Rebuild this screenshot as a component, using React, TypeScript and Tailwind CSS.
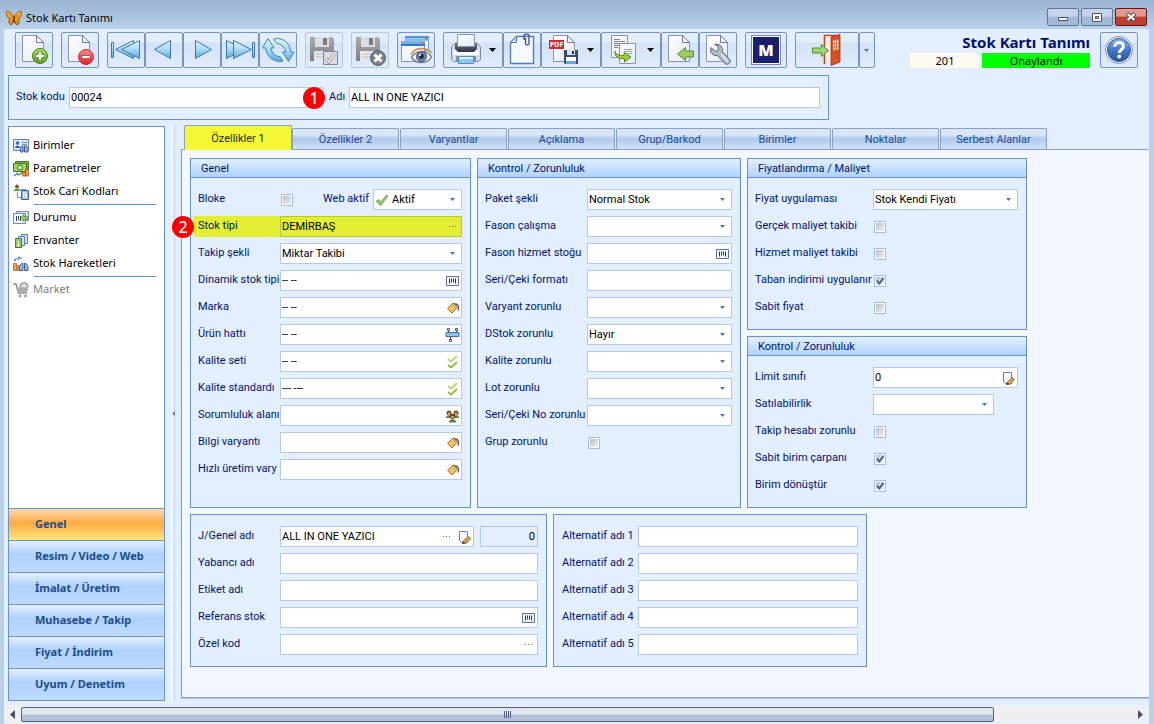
import React, { useId, useState } from 'react';

const tahoma = "font-[Roboto,'DejaVu_Sans_Condensed',sans-serif]";
const segoe = "font-['Noto_Sans','Open_Sans',sans-serif]";

// Shared gradients, referenced by the icons below
const Gradients = () => (
  <svg className="absolute h-0 w-0" aria-hidden="true">
    <defs>
      <linearGradient id="gBlue" x1="0" y1="0" x2="0" y2="1">
        <stop offset="0" stopColor="#e4f5fd" />
        <stop offset="0.5" stopColor="#a9d8f2" />
        <stop offset="1" stopColor="#5aa9dc" />
      </linearGradient>
      <linearGradient id="gDoc" x1="0" y1="0" x2="1" y2="1">
        <stop offset="0" stopColor="#ffffff" />
        <stop offset="1" stopColor="#e3e9f5" />
      </linearGradient>
      <linearGradient id="gGreen" x1="0" y1="0" x2="0" y2="1">
        <stop offset="0" stopColor="#b9e36a" />
        <stop offset="1" stopColor="#58a01c" />
      </linearGradient>
      <linearGradient id="gRed" x1="0" y1="0" x2="0" y2="1">
        <stop offset="0" stopColor="#ff8f8f" />
        <stop offset="1" stopColor="#dd1c24" />
      </linearGradient>
      <linearGradient id="gGray" x1="0" y1="0" x2="0" y2="1">
        <stop offset="0" stopColor="#a9abb0" />
        <stop offset="1" stopColor="#7c7e84" />
      </linearGradient>
      <linearGradient id="gHelp" x1="0" y1="0" x2="0" y2="1">
        <stop offset="0" stopColor="#8fb6ea" />
        <stop offset="0.5" stopColor="#3f78c8" />
        <stop offset="1" stopColor="#2a55a8" />
      </linearGradient>
      <linearGradient id="gDark" x1="0" y1="0" x2="0" y2="1">
        <stop offset="0" stopColor="#6a7284" />
        <stop offset="1" stopColor="#2c3344" />
      </linearGradient>
      <linearGradient id="gWing" x1="0" y1="0" x2="0" y2="1">
        <stop offset="0" stopColor="#ffb52a" />
        <stop offset="1" stopColor="#e07a08" />
      </linearGradient>
    </defs>
  </svg>
);

// Toolbar icons share the button's own coordinate space
const BigIcon = ({ w = 38, children }: { w?: number; children: React.ReactNode }) => (
  <svg width={w - 2} height={34} viewBox={`1 1 ${w - 2} 34`} fill="none" aria-hidden="true">
    {children}
  </svg>
);

const Page = () => (
  <g>
    <path d="M7.500 3.500h14l7 7v19h-21z" fill="url(#gDoc)" stroke="#8a93b4" />
    <path d="M21.500 3.500v7h7z" fill="#f4f7fc" stroke="#6f7aa2" />
  </g>
);

const Caret = ({ x }: { x: number }) => <path d={`M${x} 16h7l-3.500 4z`} fill="#000" />;

const NewIcon = () => (
  <BigIcon>
    <Page />
    <circle cx="25" cy="24" r="7.500" fill="url(#gGreen)" stroke="#44801a" />
    <path d="M25 19.500v9M20.500 24h9" stroke="#44801a" strokeWidth="4.400" />
    <path d="M25 20v8M21 24h8" stroke="#fff" strokeWidth="2.500" />
  </BigIcon>
);

const DeleteIcon = () => (
  <BigIcon>
    <Page />
    <circle cx="25" cy="25" r="7.500" fill="url(#gRed)" stroke="#d02a30" />
    <path d="M20.500 25h9" stroke="#b5161c" strokeWidth="4" />
    <path d="M21 25h8" stroke="#fff" strokeWidth="2.500" />
  </BigIcon>
);

const FirstIcon = () => (
  <BigIcon>
    <g fill="url(#gBlue)" stroke="#3a78b8" strokeLinejoin="round">
      <path d="M4.500 10.500h2v15h-2z" />
      <path d="M26.500 8.500v18L8.500 17.500z" />
      <path d="M32.500 8.500v18L14.500 17.500z" />
    </g>
  </BigIcon>
);

const PrevIcon = () => (
  <BigIcon>
    <path d="M25.500 8.500v18L9.500 17.500z" fill="url(#gBlue)" stroke="#3a78b8" strokeLinejoin="round" />
  </BigIcon>
);

const NextIcon = () => (
  <BigIcon>
    <path d="M12.500 8.500v18L28.500 17.500z" fill="url(#gBlue)" stroke="#3a78b8" strokeLinejoin="round" />
  </BigIcon>
);

const LastIcon = () => (
  <BigIcon>
    <g fill="url(#gBlue)" stroke="#3a78b8" strokeLinejoin="round">
      <path d="M5.500 8.500v18L23.500 17.500z" />
      <path d="M12.500 8.500v18L30.500 17.500z" />
      <path d="M31.500 10.500h2v15h-2z" />
    </g>
  </BigIcon>
);

const RefreshIcon = () => (
  <BigIcon>
    <g fill="url(#gBlue)" stroke="#3a86bd" strokeLinejoin="round">
      <path d="M9 6.500L3.500 16h3.300c.3 7.500 6.500 13.500 14.200 13.500l3-.5-3-4.500c-4.500 0-8.500-3.500-9-8.500h3z" />
      <path d="M29.500 29.500L35 20h-3.300C31.400 12 25.500 6.500 18 6.500l-3.500.7 3.500 4.300c4.500 0 8 3.500 8.700 8.500h-3.200z" />
    </g>
  </BigIcon>
);

const GrayFloppy = () => (
  <g>
    <path d="M5 5h22l2 2v22H5z" fill="url(#gGray)" />
    <path d="M10 5h14v10H10z" fill="#dcdee2" />
    <path d="M18 6h4v7h-4z" fill="#7c7e84" />
    <path d="M9 19h16v10H9z" fill="#e6e7ea" />
    <path d="M11 22h12M11 25h12" stroke="#c0c2c7" />
  </g>
);

const SaveIcon = () => (
  <BigIcon>
    <GrayFloppy />
    <path d="M18.500 19.500h14v13h-14z" fill="#d9dadd" stroke="#85878c" />
    <path d="M21 26.500l3 3.500 5.500-8" stroke="#85878c" strokeWidth="3" />
    <path d="M21 26.500l3 3.500 5.500-8" stroke="#f5f5f5" strokeWidth="1.500" />
  </BigIcon>
);

const SaveCloseIcon = () => (
  <BigIcon>
    <GrayFloppy />
    <circle cx="27" cy="26" r="7.500" fill="#7d7f85" stroke="#5f6167" />
    <path d="M23.500 22.500l7 7M30.500 22.500l-7 7" stroke="#fff" strokeWidth="3" />
  </BigIcon>
);

const PreviewIcon = () => (
  <BigIcon>
    <path d="M8.500 4.500h23v14h-23z" fill="#eef4fd" stroke="#7b9fcf" />
    <path d="M8 4h24v2.500H8z" fill="#4f97dc" />
    <path d="M8 6.500h24V9H8z" fill="#8fc1ee" />
    <path d="M28 5.500h2.500v2H28z" fill="#f2552c" />
    <path d="M4.500 9.500h23v20h-23z" fill="url(#gDoc)" stroke="#8a93b4" />
    <path d="M4 9h24v2.500H4z" fill="#7db4e8" />
    <path d="M4 11.500h24V14H4z" fill="#2f7ac9" />
    <path d="M24 10.500h2.500v2H24z" fill="#f2552c" />
    <path d="M14.500 25.500c4-7.500 16-8 20-.5-4 7-15 7.500-20 .5z" fill="#f4f5fa" stroke="#68708c" strokeWidth="1.300" />
    <path d="M14 22.500c4-7.500 15.500-7.500 20.500-1.500" stroke="#d2964e" strokeWidth="1.800" />
    <circle cx="24.500" cy="24.500" r="5" fill="#6d83a5" stroke="#475777" />
    <circle cx="24.500" cy="24.500" r="2.400" fill="#1e2740" />
    <circle cx="23" cy="23" r="1" fill="#fff" />
  </BigIcon>
);

const PrintIcon = () => (
  <BigIcon w={60}>
    <path d="M8.500 15l4-4h21l4 4v12.500l-2 2h-25l-2-2z" fill="#d3d9e6" stroke="#7e89a3" />
    <path d="M10 18h26v5H10z" fill="#f7f9fc" />
    <path d="M12 11h22v6l-3 3H15l-3-3z" fill="url(#gDark)" />
    <path d="M14.500 2.500h17v12h-17z" fill="url(#gDoc)" stroke="#8a93b4" />
    <path d="M13 24h20v6H13z" fill="#858fa6" />
    <path d="M15.500 24.500h15v7h-15z" fill="#8fc6ee" stroke="#4d8fc9" />
    <path d="M16 25h14v2H16z" fill="#d8effc" />
    <Caret x={46} />
  </BigIcon>
);

const ClipIcon = () => (
  <BigIcon>
    <path d="M13.500 4.500h17v27h-23v-21z" fill="#f4faff" stroke="#4f82bd" strokeWidth="1.400" />
    <path d="M7.500 10.500l6-6v6z" fill="#c6dff4" stroke="#4f82bd" />
    <path d="M22.500 6v5.500c0 2 3.500 2 3.500 0V4c0-2.500-5-2.500-5 0v4" stroke="#3d5273" strokeWidth="1.300" />
  </BigIcon>
);

const PdfIcon = () => (
  <BigIcon w={60}>
    <g transform="translate(5 0)">
      <Page />
    </g>
    <path d="M8 8h15v9H8z" fill="#cf2a2c" />
    <text x="9" y="15" fontSize="7" fontWeight="bold" fill="#fff" fontFamily="Noto Sans, sans-serif">
      PDF
    </text>
    <path d="M23 18h14v14H24l-1-1z" fill="#3b4a6e" />
    <path d="M26 18h8v5h-8z" fill="#d8dfec" />
    <path d="M31 19h2v3h-2z" fill="#26324f" />
    <path d="M25 25h10v7H25z" fill="#fff" />
    <path d="M25 29h10v3H25z" fill="#5fa8e2" />
    <Caret x={46} />
  </BigIcon>
);

const CopyIcon = () => (
  <BigIcon w={60}>
    <path d="M10.500 3.500h16v22h-16z" fill="url(#gDoc)" stroke="#8a93b4" />
    <path d="M13 7.500h6M13 9.500h11M13 11.500h9M13 13.500h5M13 15.500h4" stroke="#7b8099" />
    <path d="M18.500 11.500h16v20h-16z" fill="url(#gDoc)" stroke="#8a93b4" />
    <path d="M23 17.500h8M23 19.500h8M26 21.500h5" stroke="#9ba0b5" />
    <path d="M14 19c1 4 4 4.500 9 4.500v-3l7 4.500-6.500 5v-3.200C16 27 13.500 24 14 19z" fill="#9bd03d" stroke="#55881d" />
    <Caret x={46} />
  </BigIcon>
);

const ImportIcon = () => (
  <BigIcon>
    <Page />
    <path d="M16.500 22l8-6.500v3.500h8v6h-8v3.500z" fill="#9ccb66" stroke="#548f2c" strokeLinejoin="round" />
  </BigIcon>
);

const WrenchIcon = () => (
  <BigIcon>
    <Page />
    <path
      d="M12 15.500l4.500 4 3-1.500-.5-4-3.500-1.500c5-1 8.500 2 8 7l7.500 8.500c1 3-2 5-4.500 4l-8-8.500c-4.500 1-8-3-6.500-8z"
      fill="#b4bccb"
      stroke="#59627a"
      strokeLinejoin="round"
    />
    <path d="M22 22l7 7.500" stroke="#e6eaf2" strokeWidth="1.500" />
  </BigIcon>
);

const ExitIcon = () => (
  <BigIcon w={64}>
    <path d="M29.500 32V3.500h15" stroke="#cc3f16" strokeWidth="1.600" />
    <path d="M30.500 4.500h6v26h-6z" fill="#f6efec" />
    <path d="M36 5l9-2.500V30l-9 3.500z" fill="#d94f20" stroke="#a83410" strokeWidth="0.800" />
    <path d="M38 8.500l5.500-1v10l-5.500 1z" fill="#f4dfc0" />
    <path d="M39.800 8v10M41.700 8v10M38 12l5.500-.8M38 15.300l5.500-.8" stroke="#b06034" strokeWidth="0.700" />
    <path d="M33.500 18.500l-7-6v3.500h-9v5h9v3.500z" fill="#a3d772" stroke="#4e8f2c" strokeLinejoin="round" />
  </BigIcon>
);

const HelpIcon = () => (
  <BigIcon>
    <circle cx="19" cy="18" r="13.500" fill="#f3f7fd" stroke="#7f8fb4" />
    <circle cx="19" cy="18" r="11.500" fill="url(#gHelp)" stroke="#2f559c" />
    <path d="M14.800 14.800c0-5.600 8.600-5.600 8.600-.4 0 3-4.100 3.200-4.100 6.600" stroke="#fff" strokeWidth="3" />
    <circle cx="19.200" cy="24.500" r="1.900" fill="#fff" />
  </BigIcon>
);

const Butterfly = () => (
  <svg width="16" height="16" viewBox="0 0 16 16" aria-hidden="true">
    <path d="M8 7C6 3 2 .5.500 1.500 0 4 1 8 4 9c-2 1-1.500 5 1 6 2-1 2.500-4 3-6 .5 2 1 5 3 6 2.500-1 3-5 1-6 3-1 4-5 3.500-7.500C14 .5 10 3 8 7z" fill="url(#gWing)" stroke="#7a4207" strokeWidth="0.700" />
    <path d="M8 6v7" stroke="#3c2408" strokeWidth="1.200" />
    <path d="M7.500 8L4 4.500M8.500 8L12 4.500" stroke="#b0640c" strokeWidth="0.600" />
  </svg>
);

// Small icons inside the fields
const Small = ({ children }: { children: React.ReactNode }) => (
  <svg width="16" height="16" viewBox="0 0 16 16" fill="none" aria-hidden="true">
    {children}
  </svg>
);

const fieldIcons: Record<string, React.ReactNode> = {
  dots: (
    <Small>
      <path d="M4 7.500h1M7 7.500h1M10 7.500h1" stroke="#4a78b5" />
    </Small>
  ),
  barcode: (
    <Small>
      <path d="M1.500 3.500h12v9h-12z" fill="#f2f5fc" stroke="#5b71a8" />
      <path d="M4.500 5.500v5M6.500 5.500v4M8.500 5.500v4M10.500 5.500v5" stroke="#30354c" />
    </Small>
  ),
  tag: (
    <Small>
      <path d="M2.500 8.500L8 3l3.500 1 .5 3.500-5 5.500z" fill="#fbc065" stroke="#a96a22" strokeLinejoin="round" />
      <path d="M9.500 5.500c2-3 5.500-.5 3.500 5" stroke="#5c5c66" strokeWidth="1.200" />
      <circle cx="9.500" cy="5.500" r="1" fill="#fff" stroke="#7a5a3a" strokeWidth="0.600" />
    </Small>
  ),
  line: (
    <Small>
      <path d="M1 5.500h13v4H1z" fill="#8ec0ea" stroke="#3d70ad" />
      <path d="M3.500 3.500v2M11.500 3.500v2M5.500 10v2" stroke="#44506e" />
      <path d="M2.500 1.500h2v2h-2zM10.500 1.500h2v2h-2zM4.500 12.500h2v2h-2z" fill="#fff" stroke="#44506e" />
    </Small>
  ),
  ticks: (
    <Small>
      <path d="M3 5l3 2.500 6-5.500" stroke="#b8d977" strokeWidth="2" />
      <path d="M3 11l3 2.500 6-5.500" stroke="#8fc23f" strokeWidth="2" />
    </Small>
  ),
  people: (
    <Small>
      <path d="M1 9.500c1-2 5-2 6 0zM8 9.500c1-2 5-2 6 0zM4 14c1-3 6-3 7 0z" fill="#4f9c3a" stroke="#2e6b22" strokeWidth="0.700" />
      <circle cx="4" cy="5" r="2.500" fill="#7b4a22" />
      <circle cx="11" cy="5" r="2.500" fill="#7b4a22" />
      <circle cx="7.500" cy="8.500" r="2.700" fill="#6b3d19" />
      <circle cx="4" cy="5.700" r="1.300" fill="#e0a872" />
      <circle cx="11" cy="5.700" r="1.300" fill="#e0a872" />
      <circle cx="7.500" cy="9.200" r="1.400" fill="#e0a872" />
    </Small>
  ),
  edit: (
    <Small>
      <path d="M2.500 2.500h8v11h-6l-2-2z" fill="#f5f8fe" stroke="#6d7fb0" />
      <path d="M6 12.500l5-5 2.500 2L9 14.500z" fill="#e3a04c" stroke="#8a4f1c" strokeWidth="0.800" />
      <path d="M5 15l1-2.500 2.500 2z" fill="#333" />
    </Small>
  ),
};

const sideIcons: Record<string, React.ReactNode> = {
  units: (
    <Small>
      <path d="M.5 1.500h15v11H.5z" fill="#d9e6f8" stroke="#5b80b8" />
      <circle cx="4.500" cy="5" r="1.700" fill="#41629b" />
      <path d="M2 10c.5-3.500 4.500-3.500 5 0z" fill="#41629b" />
      <path d="M9 4.500h5M9 6.500h5" stroke="#6d93c9" />
      <path d="M7.500 14V10l1.500-2h1v6zM11.500 14V8h1.500l2 2.500V14z" fill="#9db9e4" stroke="#3a5a97" />
    </Small>
  ),
  money: (
    <Small>
      <path d="M2.500.5h13v8h-13z" fill="#7cb548" stroke="#3c7a1c" />
      <path d="M.5 2.500h13v8H.5z" fill="#a4d36b" stroke="#3c7a1c" />
      <circle cx="7" cy="6.500" r="2.500" fill="#d8efb8" stroke="#3c7a1c" />
      <path d="M1 15l3-2.500 2 1.500 3-2.500" stroke="#3f79c2" strokeWidth="1.300" />
      <path d="M9.500 11h3v4h-3zM12.500 8.500h3v6.500h-3z" fill="#ef9f4e" stroke="#a3561a" strokeWidth="0.800" />
    </Small>
  ),
  codes: (
    <Small>
      <circle cx="4" cy="2.500" r="2" fill="#8a552b" />
      <path d="M.5 7c.5-3.500 6.500-3.500 7 0z" fill="#5ba23c" />
      <path d="M4.500 8v5.500h4M7 5.500h6" stroke="#7d8db0" />
      <path d="M8.500 6.500h7v9h-7z" fill="#8db9ec" stroke="#3867a8" />
      <path d="M10.500 8.500h2.500v2.500h-2.500zM10.500 11h3v2.500h-3z" stroke="#fff" />
    </Small>
  ),
  status: (
    <Small>
      <path d="M3.500 1.500h12v9h-12z" fill="#dfe8f7" stroke="#7089b8" />
      <path d="M.5 3.500h12v10H.5z" fill="#f1f5fc" stroke="#7089b8" />
      <path d="M3.500 6v5M5.500 6v4M7.500 6v5" stroke="#39415c" />
      <path d="M7 8l4-3.500V6.500h3.500v3H11v2z" fill="#97cf58" stroke="#4b8b28" strokeWidth="0.700" />
    </Small>
  ),
  stock: (
    <Small>
      <path d="M8.500 1.500h6v9h-6z" fill="#cfe0f6" stroke="#5a7fb8" />
      <path d="M5.500 3.500h6v9h-6z" fill="#cfe0f6" stroke="#5a7fb8" />
      <path d="M2.500 5.500h6v9h-6z" fill="#8fd05a" stroke="#3c8a1e" />
      <path d="M4.500 8.500h1v4M4 12.500h3" stroke="#fff" />
    </Small>
  ),
  moves: (
    <Small>
      <path d="M1.500 4l2-1.500 2 1L9 1.500" stroke="#3f79c2" />
      <circle cx="2" cy="4" r="1" fill="#3f79c2" />
      <circle cx="6" cy="1.500" r="1" fill="#3f79c2" />
      <path d="M.5 7.500h3v7h-3zM4.500 9.500h2v5h-2z" fill="#f0a050" stroke="#a3561a" strokeWidth="0.700" />
      <path d="M6.500 14.500v-4l2-3h1.500v7zM11.500 14.500v-7H13l2 3v4z" fill="#9db9e4" stroke="#3a5a97" />
    </Small>
  ),
  cart: (
    <Small>
      <path d="M0 2h3l2.500 9h8.500" stroke="#8e8e8e" strokeWidth="1.500" />
      <circle cx="11" cy="4.500" r="4" fill="#c4c4c4" stroke="#8e8e8e" />
      <path d="M8 4h6M11 1v7" stroke="#eee" />
      <path d="M4 5.500h11.500l-1.500 4.500H5z" fill="#adadad" />
      <circle cx="7" cy="14" r="1.300" fill="#8e8e8e" />
      <circle cx="12.500" cy="14" r="1.300" fill="#8e8e8e" />
    </Small>
  ),
};

interface ToolButtonProps {
  label: string;
  disabled?: boolean;
  children: React.ReactNode;
}

const ToolButton: React.FC<ToolButtonProps> = ({ label, disabled, children }) => (
  <button
    type="button"
    aria-label={label}
    disabled={disabled}
    className="flex h-9 shrink-0 items-center justify-center rounded-xs border border-[#7595c2] bg-linear-to-b from-[#e4eefb] from-25% via-[#d3e2f5] via-30% to-[#e0ecfb] disabled:border-[#b5c8e2]"
  >
    {children}
  </button>
);

const Toolbar = () => (
  <div className="flex items-start gap-2 pt-[3px] pr-[11px] pl-[11px]">
    <ToolButton label="Yeni"><NewIcon /></ToolButton>
    <ToolButton label="Sil"><DeleteIcon /></ToolButton>
    <div className="flex">
      <ToolButton label="İlk"><FirstIcon /></ToolButton>
      <ToolButton label="Önceki"><PrevIcon /></ToolButton>
      <ToolButton label="Sonraki"><NextIcon /></ToolButton>
      <ToolButton label="Son"><LastIcon /></ToolButton>
      <ToolButton label="Yenile"><RefreshIcon /></ToolButton>
    </div>
    <ToolButton label="Kaydet" disabled><SaveIcon /></ToolButton>
    <ToolButton label="Kaydet ve kapat" disabled><SaveCloseIcon /></ToolButton>
    <ToolButton label="Önizleme"><PreviewIcon /></ToolButton>
    <div className="flex">
      <ToolButton label="Yazdır"><PrintIcon /></ToolButton>
      <ToolButton label="Ekler"><ClipIcon /></ToolButton>
      <ToolButton label="PDF"><PdfIcon /></ToolButton>
      <ToolButton label="Kopyala"><CopyIcon /></ToolButton>
      <ToolButton label="İçeri al"><ImportIcon /></ToolButton>
      <ToolButton label="Ayarlar"><WrenchIcon /></ToolButton>
    </div>
    <ToolButton label="Modül">
      <span className="mx-[5px] grid size-[30px] place-items-center border border-[#7d86ad] bg-white p-px">
        <span className={`${segoe} grid size-full place-items-center bg-[#1a2070] text-base leading-none font-black text-white`}>M</span>
      </span>
    </ToolButton>
    <div className="flex">
      <ToolButton label="Çıkış"><ExitIcon /></ToolButton>
      <ToolButton label="Çıkış seçenekleri">
        <svg width="14" height="34" viewBox="0 0 14 34" aria-hidden="true">
          <path d="M4 16h5l-2.500 3z" fill="#4a78b5" />
        </svg>
      </ToolButton>
    </div>
    <div className={`${segoe} ml-auto flex flex-col items-end pr-0.5`}>
      <h1 className="text-[15px] leading-[21px] font-bold text-[#00106e]">Stok Kartı Tanımı</h1>
      <div className="flex gap-0.5 text-center text-[11px] leading-[15px] text-black">
        <span className="w-[70px] bg-[#fffaf0]">201</span>
        <span className="w-[108px] bg-[#00ff00]">Onaylandı</span>
      </div>
    </div>
    <ToolButton label="Yardım"><HelpIcon /></ToolButton>
  </div>
);

const TitleBar = () => (
  <div className="flex h-[29px] items-start bg-linear-to-b from-[#99b4d1] to-[#b9d1ea] pt-2 pr-[7px] pl-1.5">
    <div className="flex items-center gap-1">
      <Butterfly />
      <span className={`${segoe} text-[11px] leading-[19px] text-black`}>Stok Kartı Tanımı</span>
    </div>
    <div className="ml-auto flex gap-0.5">
      <button type="button" aria-label="Küçült" className="grid h-[18px] w-8 place-items-center rounded-xs border border-[#5f7694] bg-linear-to-b from-[#c5d6ea] from-45% to-[#a3bad6] to-50%">
        <svg width="12" height="12" viewBox="0 0 12 12"><path d="M1.500 6.500h9v3h-9z" fill="#fff" stroke="#4a5468" /></svg>
      </button>
      <button type="button" aria-label="Büyüt" className="grid h-[18px] w-8 place-items-center rounded-xs border border-[#5f7694] bg-linear-to-b from-[#c5d6ea] from-45% to-[#a3bad6] to-50%">
        <svg width="12" height="12" viewBox="0 0 12 12"><path d="M1.500 2.500h9v8h-9z" fill="#fff" stroke="#4a5468" /><path d="M4.500 5.500h3v2h-3z" fill="#a9bdd6" stroke="#4a5468" /></svg>
      </button>
      <button type="button" aria-label="Kapat" className="grid h-[18px] w-8 place-items-center rounded-xs border border-[#5a1a1c] bg-linear-to-b from-[#e39a8c] from-45% to-[#bd3f2c] to-50%">
        <svg width="12" height="12" viewBox="0 0 12 12"><path d="M2 2.500l8 7M10 2.500l-8 7" stroke="#4a4a58" strokeWidth="4" /><path d="M2.500 3l7 6M9.500 3l-7 6" stroke="#fff" strokeWidth="2.200" /></svg>
      </button>
    </div>
  </div>
);

const Badge = ({ children }: { children: React.ReactNode }) => (
  <span className={`${segoe} grid size-[22px] place-items-center rounded-full bg-[#fe0000] text-base leading-none font-medium text-white`}>
    {children}
  </span>
);

interface TextBoxProps {
  id: string;
  value?: string;
  icons?: string[];
}

const TextBox: React.FC<TextBoxProps> = ({ id, value = '', icons = [] }) => (
  <div className="flex h-[21px] min-w-0 flex-1 items-center border border-[#b3c9e6] bg-white">
    <input id={id} defaultValue={value} className="h-full min-w-0 flex-1 bg-transparent pl-px text-black outline-none" />
    {icons.map((icon) => (
      <button key={icon} type="button" aria-label={icon} className="ml-0.5 shrink-0">
        {fieldIcons[icon]}
      </button>
    ))}
  </div>
);

const SelectBox = ({ id, value = '', tick }: { id: string; value?: string; tick?: boolean }) => (
  <div className="grid h-[21px] min-w-0 flex-1 items-center border border-[#b3c9e6] bg-white">
    <select
      id={id}
      defaultValue={value}
      className={`col-start-1 row-start-1 h-full min-w-0 appearance-none bg-transparent pt-px text-black outline-none ${tick ? 'pl-[18px]' : 'pl-px'}`}
    >
      <option value={value}>{value}</option>
    </select>
    {tick && (
      <svg width="14" height="14" viewBox="0 0 14 14" fill="none" className="pointer-events-none col-start-1 row-start-1 ml-px" aria-hidden="true">
        <path d="M1 8l2.500-1.500L5.500 9 12 1.500 13 3 6 12.500H5z" fill="#8fc25a" stroke="#6a9f3c" strokeWidth="0.600" />
      </svg>
    )}
    <svg width="5" height="3" viewBox="0 0 5 3" className="pointer-events-none col-start-1 row-start-1 mr-1.5 justify-self-end" aria-hidden="true">
      <path d="M0 0h5L2.500 3z" fill="#4a78b5" />
    </svg>
  </div>
);

const CheckBox = ({ id, checked = false }: { id: string; checked?: boolean }) => (
  <span className="ml-px grid size-3 shrink-0">
    <input
      id={id}
      type="checkbox"
      defaultChecked={checked}
      className="peer col-start-1 row-start-1 size-3 appearance-none border border-[#a3bfe1] bg-linear-to-br from-[#b4b9c2] to-[#f6f7f9] shadow-[inset_0_0_0_1px_#fff]"
    />
    <svg viewBox="0 0 12 12" fill="none" className="pointer-events-none invisible col-start-1 row-start-1 size-3 peer-checked:visible" aria-hidden="true">
      <path d="M3 5.500l2.300 3L9.500 3" stroke="#41608e" strokeWidth="1.900" />
    </svg>
  </span>
);

interface FieldData {
  label: string;
  kind?: 'text' | 'select' | 'check';
  value?: string;
  icons?: string[];
  checked?: boolean;
  narrow?: boolean;
}

const Field = ({ field, labelClass }: { field: FieldData; labelClass: string }) => {
  const id = useId();
  return (
    <div className="flex h-[21px] items-center">
      <label htmlFor={id} className={`shrink-0 whitespace-nowrap ${labelClass}`}>{field.label}</label>
      {field.kind === 'check' && <CheckBox id={id} checked={field.checked} />}
      {field.kind === 'select' && (
        <div className={`flex flex-1 ${field.narrow ? 'pr-6' : ''}`}>
          <SelectBox id={id} value={field.value} />
        </div>
      )}
      {(!field.kind || field.kind === 'text') && <TextBox id={id} value={field.value} icons={field.icons} />}
    </div>
  );
};

const Group = ({ title, className = '', children }: { title?: string; className?: string; children: React.ReactNode }) => (
  <section className={`border border-[#6593cf] bg-[#e3efff] ${className}`}>
    {title && (
      <h2 className="h-[19px] border-b border-[#6593cf] bg-linear-to-b from-[#e3efff] to-[#afd2ff] pl-2.5 leading-[19px]">{title}</h2>
    )}
    <div className="flex flex-col gap-1.5 py-[11px] pr-2 pl-[7px]">{children}</div>
  </section>
);

const genelFields: FieldData[] = [
  { label: 'Dinamik stok tipi', value: '-- --', icons: ['barcode'] },
  { label: 'Marka', value: '-- --', icons: ['tag'] },
  { label: 'Ürün hattı', value: '-- --', icons: ['line'] },
  { label: 'Kalite seti', value: '-- --', icons: ['ticks'] },
  { label: 'Kalite standardı', value: '--- ---', icons: ['ticks'] },
  { label: 'Sorumluluk alanı', icons: ['people'] },
  { label: 'Bilgi varyantı', icons: ['tag'] },
  { label: 'Hızlı üretim vary', icons: ['tag'] },
];

const kontrolFields: FieldData[] = [
  { label: 'Paket şekli', kind: 'select', value: 'Normal Stok' },
  { label: 'Fason çalışma', kind: 'select' },
  { label: 'Fason hizmet stoğu', icons: ['barcode'] },
  { label: 'Seri/Çeki formatı' },
  { label: 'Varyant zorunlu', kind: 'select' },
  { label: 'DStok zorunlu', kind: 'select', value: 'Hayır' },
  { label: 'Kalite zorunlu', kind: 'select' },
  { label: 'Lot zorunlu', kind: 'select' },
  { label: 'Seri/Çeki No zorunlu', kind: 'select' },
  { label: 'Grup zorunlu', kind: 'check' },
];

const fiyatFields: FieldData[] = [
  { label: 'Fiyat uygulaması', kind: 'select', value: 'Stok Kendi Fiyatı' },
  { label: 'Gerçek maliyet takibi', kind: 'check' },
  { label: 'Hizmet maliyet takibi', kind: 'check' },
  { label: 'Taban indirimi uygulanır', kind: 'check', checked: true },
  { label: 'Sabit fiyat', kind: 'check' },
];

const limitFields: FieldData[] = [
  { label: 'Limit sınıfı', value: '0', icons: ['edit'] },
  { label: 'Satılabilirlik', kind: 'select', narrow: true },
  { label: 'Takip hesabı zorunlu', kind: 'check' },
  { label: 'Sabit birim çarpanı', kind: 'check', checked: true },
  { label: 'Birim dönüştür', kind: 'check', checked: true },
];

const adFields: FieldData[] = [
  { label: 'Yabancı adı' },
  { label: 'Etiket adı' },
  { label: 'Referans stok', icons: ['barcode'] },
  { label: 'Özel kod', icons: ['dots'] },
];

const sideGroups = [
  [
    { label: 'Birimler', icon: 'units' },
    { label: 'Parametreler', icon: 'money' },
    { label: 'Stok Cari Kodları', icon: 'codes' },
  ],
  [
    { label: 'Durumu', icon: 'status' },
    { label: 'Envanter', icon: 'stock' },
    { label: 'Stok Hareketleri', icon: 'moves' },
  ],
  [{ label: 'Market', icon: 'cart', disabled: true }],
];

const sections = ['Genel', 'Resim / Video / Web', 'İmalat / Üretim', 'Muhasebe / Takip', 'Fiyat / İndirim', 'Uyum / Denetim'];

const tabs = ['Özellikler 1', 'Özellikler 2', 'Varyantlar', 'Açıklama', 'Grup/Barkod', 'Birimler', 'Noktalar', 'Serbest Alanlar'];

const Sidebar = () => {
  const [section, setSection] = useState<string>('Genel');

  return (
    <aside className={`${segoe} mt-px flex w-[157px] shrink-0 flex-col border border-[#6593cf] bg-white`}>
      <div className="flex-1 pt-[7px] text-black">
        {sideGroups.map((group, i) => (
          <div key={group[0].label}>
            {i > 0 && <hr className="my-px mr-2 ml-[25px] border-[#6593cf]" />}
            {group.map((item) => (
              <button
                key={item.label}
                type="button"
                disabled={'disabled' in item}
                className="flex h-[23px] w-full items-center gap-1 pl-1 text-left disabled:text-[#7d7d7d]"
              >
                {sideIcons[item.icon]}
                {item.label}
              </button>
            ))}
          </div>
        ))}
      </div>
      <nav>
        {sections.map((name) => (
          <button
            key={name}
            type="button"
            onClick={() => setSection(name)}
            className={`block h-8 w-full border-t border-[#6593cf] bg-linear-to-b pl-[26px] text-left font-bold text-[#204d89] ${
              name === section
                ? 'from-[#ffd9a8] from-0% via-[#ffab3f] via-45% to-[#fee67c]'
                : 'from-[#e3efff] from-0% via-[#add1ff] via-45% to-[#c0dbff]'
            }`}
          >
            {name}
          </button>
        ))}
      </nav>
    </aside>
  );
};

const FormPanel = () => (
  <div className="flex flex-1 flex-col gap-1.5 border border-r-0 border-[#8ba0c4] bg-[#f3f7ff] pt-2 pb-4 pl-2 shadow-[0_1px_1px_#b5cbe6]">
    <div className="flex gap-1.5">
      <Group title="Genel" className="w-[281px]">
        <div className="flex h-[21px] items-center">
          <label htmlFor="bloke" className="w-[82px] shrink-0">Bloke</label>
          <CheckBox id="bloke" />
          <label htmlFor="webAktif" className="mr-1 ml-auto">Web aktif</label>
          <div className="flex w-[89px]">
            <SelectBox id="webAktif" value="Aktif" tick />
          </div>
        </div>
        <div className="relative -ml-1 flex h-[21px] items-center bg-[#e2ef32] pl-1">
          <div className="absolute -left-[22px]">
            <Badge>2</Badge>
          </div>
          <label htmlFor="stokTipi" className="w-[82px] shrink-0">Stok tipi</label>
          <div className="flex h-[21px] min-w-0 flex-1 items-center border border-[#b9c92c]">
            <input id="stokTipi" defaultValue="DEMİRBAŞ" className="h-full min-w-0 flex-1 bg-transparent pl-px text-black outline-none" />
            <button type="button" aria-label="Stok tipi seç" className="shrink-0">{fieldIcons.dots}</button>
          </div>
        </div>
        <Field field={{ label: 'Takip şekli', kind: 'select', value: 'Miktar Takibi' }} labelClass="w-[82px]" />
        {genelFields.map((f) => <Field key={f.label} field={f} labelClass="w-[82px]" />)}
      </Group>

      <Group title="Kontrol / Zorunluluk" className="w-[264px]">
        {kontrolFields.map((f) => <Field key={f.label} field={f} labelClass="w-[102px]" />)}
      </Group>

      <div className="flex w-[280px] flex-col gap-1.5">
        <Group title="Fiyatlandırma / Maliyet">
          {fiyatFields.map((f) => <Field key={f.label} field={f} labelClass="w-[118px]" />)}
        </Group>
        <Group title="Kontrol / Zorunluluk">
          {limitFields.map((f) => <Field key={f.label} field={f} labelClass="w-[118px]" />)}
        </Group>
      </div>
    </div>

    <div className="flex gap-1.5">
      <Group className="w-[357px]">
        <div className="flex items-center">
          <label htmlFor="genelAdi" className="w-[82px] shrink-0">J/Genel adı</label>
          <TextBox id="genelAdi" value="ALL IN ONE YAZICI" icons={['dots', 'edit']} />
          <input
            aria-label="Sayaç"
            defaultValue="0"
            className="ml-1.5 h-[21px] w-[58px] border border-[#b3c9e6] bg-transparent pr-0.5 text-right text-black outline-none"
          />
        </div>
        {adFields.map((f) => <Field key={f.label} field={f} labelClass="w-[82px]" />)}
      </Group>
      <Group className="w-[314px]">
        {[1, 2, 3, 4, 5].map((n) => (
          <Field key={n} field={{ label: `Alternatif adı ${n}` }} labelClass="w-[77px] pl-px" />
        ))}
      </Group>
    </div>
  </div>
);

const App: React.FC = () => {
  const [tab, setTab] = useState<string>('Özellikler 1');

  return (
    <div className={`${tahoma} flex min-h-screen flex-col bg-[#b9d1ea] text-[11px] text-[#00156e]`}>
      <Gradients />
      <TitleBar />
      <main className="ml-1 mr-[5px] flex flex-1 flex-col bg-[#e3efff]">
        <Toolbar />

        {/* Stock code and name */}
        <div className="mt-[7px] ml-1 flex h-[45px] w-[821px] items-center border border-[#6593cf] pr-2 pl-[7px]">
          <label htmlFor="stokKodu" className="w-[53px] shrink-0">Stok kodu</label>
          <div className="relative flex w-[254px]">
            <TextBox id="stokKodu" value="00024" />
            <div className="absolute -right-[2px]">
              <Badge>1</Badge>
            </div>
          </div>
          <label htmlFor="adi" className="ml-1.5 w-5 shrink-0">Adı</label>
          <TextBox id="adi" value="ALL IN ONE YAZICI" />
        </div>

        <div className="mt-[5px] mb-[5px] ml-1 flex flex-1">
          <Sidebar />

          {/* Splitter */}
          <div className="mx-1.5 flex w-1 items-center border-r border-l border-r-[#c5dcf9] border-l-white">
            <svg width="3" height="5" viewBox="0 0 3 5" className="shrink-0" aria-hidden="true">
              <path d="M3 0v5L0 2.500z" fill="#6d87b0" />
            </svg>
          </div>

          <div className="mb-[3px] flex min-w-0 flex-1 flex-col">
            <div role="tablist" className="flex h-6 items-end pl-[3px]">
              {tabs.map((name) => (
                <button
                  key={name}
                  type="button"
                  role="tab"
                  aria-selected={name === tab}
                  onClick={() => setTab(name)}
                  className={
                    name === tab
                      ? 'relative -mb-px h-[25px] w-[108px] rounded-t-xs border border-b-0 border-[#8ba0c4] bg-[#f5f935] pt-0.5 text-[#1b2f10]'
                      : 'mr-px h-[21px] w-[107px] rounded-t-xs border border-b-0 border-[#8ba0c4] bg-linear-to-b from-[#d8e6f8] from-30% via-[#adc9ec] via-50% to-[#d3e3f8] pt-0.5 text-[#1e4a94]'
                  }
                >
                  {name}
                </button>
              ))}
            </div>
            <FormPanel />
          </div>
        </div>

        {/* Horizontal scrollbar */}
        <div className="mb-0.5 flex h-4 items-center bg-[#f0f0f0]">
          <button type="button" aria-label="Sola kaydır" className="grid h-full w-[17px] place-items-center">
            <svg width="5" height="9" viewBox="0 0 5 9"><path d="M5 0v9L0 4.500z" fill="#44506e" /></svg>
          </button>
          <div className="grid h-[15px] w-[85%] place-items-center rounded-xs border border-[#50608c] bg-linear-to-b from-[#e3e8f0] from-45% to-[#b3c2d6] to-55%">
            <svg width="7" height="7" viewBox="0 0 7 7"><path d="M.5 0v7M2.500 0v7M4.500 0v7M6.500 0v7" stroke="#50608c" /></svg>
          </div>
          <button type="button" aria-label="Sağa kaydır" className="ml-auto grid h-full w-[17px] place-items-center">
            <svg width="5" height="9" viewBox="0 0 5 9"><path d="M0 0v9l5-4.500z" fill="#44506e" /></svg>
          </button>
        </div>
      </main>
    </div>
  );
};

export default App;
